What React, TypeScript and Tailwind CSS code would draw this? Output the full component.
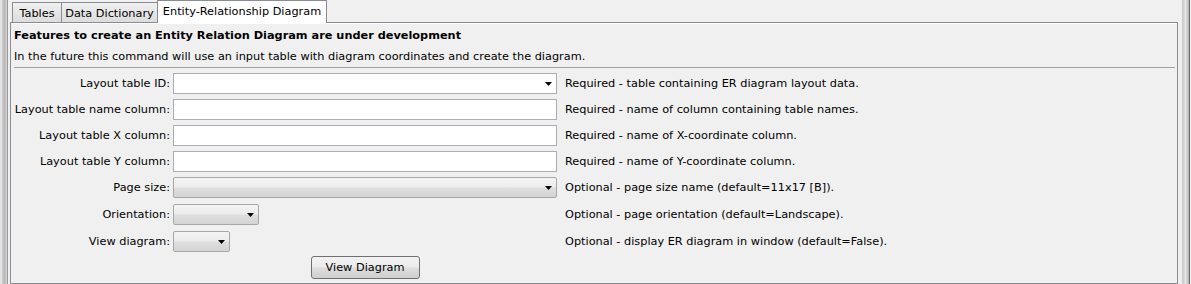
import React from "react";

const font = { fontFamily: '"DejaVu Sans", Verdana, sans-serif' };

function Arrow() {
  return (
    <svg width="7" height="4" viewBox="0 0 7 4" className="shrink-0">
      <polygon points="0,0 7,0 3.5,4" fill="#000" />
    </svg>
  );
}

function TextField() {
  return <div className="h-[21px] w-[384px] border border-[#abadb3] bg-white" />;
}

function EditableCombo() {
  return (
    <div className="flex h-[21px] w-[384px] items-center justify-end border border-[#abadb3] bg-white pr-[4px]">
      <Arrow />
    </div>
  );
}

function Combo({ width }: { width: string }) {
  return (
    <div
      className={`flex h-[21px] ${width} items-center justify-end rounded-[2px] border border-[#a7a7a7] bg-[linear-gradient(to_bottom,#f4f4f4_0%,#ececec_48%,#dedede_52%,#d4d4d4_100%)] pr-[4px]`}
    >
      <Arrow />
    </div>
  );
}

interface RowProps {
  label: string;
  field: React.ReactNode;
  desc: string;
  className?: string;
}

function Row({ label, field, desc, className }: RowProps) {
  return (
    <div className={`flex h-[21px] items-center ${className ?? ""}`}>
      <div className="w-[156px] text-right whitespace-nowrap">{label}</div>
      <div className="ml-[3px] w-[384px]">{field}</div>
      <div className="ml-[8px] whitespace-nowrap">{desc}</div>
    </div>
  );
}

export default function App() {
  return (
    <div
      className="flex h-[284px] w-[1191px] overflow-hidden bg-[#f0f0f0] text-[11.3px] leading-[13px] text-black"
      style={font}
    >
      {/* left splitter */}
      <div className="flex w-[10px] shrink-0">
        <div className="w-[2px] bg-[#e4e4e4]" />
        <div className="w-[5px] bg-[linear-gradient(to_right,#cfcfcf,#b9b9b9,#d6d6d6)]" />
        <div className="w-px bg-[#9a9a9a]" />
        <div className="w-[2px] bg-[#f0f0f0]" />
      </div>

      {/* tabbed pane */}
      <div className="flex w-[1168px] shrink-0 flex-col">
        <div className="relative z-10 flex h-[22px] items-end pl-[2px]">
          <div className="flex h-[20px] w-[50px] items-center justify-center border border-b-0 border-[#898c95] bg-[linear-gradient(to_bottom,#f0f0f0,#dcdcdc)] pt-[1px]">
            Tables
          </div>
          <div className="flex h-[20px] w-[96px] items-center justify-center border border-b-0 border-l-0 border-[#898c95] bg-[linear-gradient(to_bottom,#f0f0f0,#dcdcdc)] pt-[1px]">
            Data Dictionary
          </div>
          <div className="-mb-[1px] -ml-px flex h-[23px] w-[170px] items-center justify-center border border-b-0 border-[#898c95] bg-white pb-[2px]">
            Entity-Relationship Diagram
          </div>
        </div>

        <div className="flex flex-1 flex-col border border-[#898c95] shadow-[inset_0_1px_0_#ffffff] pl-[3px] pr-[2px]">
          <div className="mt-[6px] font-bold">
            Features to create an Entity Relation Diagram are under development
          </div>
          <div className="mt-[8px]">
            In the future this command will use an input table with diagram coordinates and create the diagram.
          </div>
          <div className="mt-[4px] h-px bg-[#a0a0a0]" />

          <div className="flex flex-col">
            <Row
              className="mt-[5px]"
              label="Layout table ID:"
              field={<EditableCombo />}
              desc="Required - table containing ER diagram layout data."
            />
            <Row
              className="mt-[5px]"
              label="Layout table name column:"
              field={<TextField />}
              desc="Required - name of column containing table names."
            />
            <Row
              className="mt-[5px]"
              label="Layout table X column:"
              field={<TextField />}
              desc="Required - name of X-coordinate column."
            />
            <Row
              className="mt-[5px]"
              label="Layout table Y column:"
              field={<TextField />}
              desc="Required - name of Y-coordinate column."
            />
            <Row
              className="mt-[5px]"
              label="Page size:"
              field={<Combo width="w-[384px]" />}
              desc="Optional - page size name (default=11x17 [B])."
            />
            <Row
              className="mt-[6px]"
              label="Orientation:"
              field={<Combo width="w-[86px]" />}
              desc="Optional - page orientation (default=Landscape)."
            />
            <Row
              className="mt-[6px]"
              label="View diagram:"
              field={<Combo width="w-[57px]" />}
              desc="Optional - display ER diagram in window (default=False)."
            />
            <div className="mt-[4px] flex h-[23px]">
              <div className="w-[159px]" />
              <div className="flex w-[384px] justify-center">
                <button className="h-[23px] w-[109px] rounded-[3px] border border-[#707070] bg-[linear-gradient(to_bottom,#f2f2f2_0%,#ebebeb_48%,#dddddd_52%,#cfcfcf_100%)] text-[11.3px]">
                  View Diagram
                </button>
              </div>
            </div>
          </div>
        </div>
      </div>

      {/* right splitter */}
      <div className="flex w-[13px] shrink-0">
        <div className="w-[4px] bg-[#f0f0f0]" />
        <div className="w-[7px] bg-[linear-gradient(to_right,#c4c4c4,#e6e6e6,#b4b4b4)]" />
        <div className="w-px bg-[#6a6a6a]" />
        <div className="w-px bg-[#f4f4f4]" />
      </div>
    </div>
  );
}
